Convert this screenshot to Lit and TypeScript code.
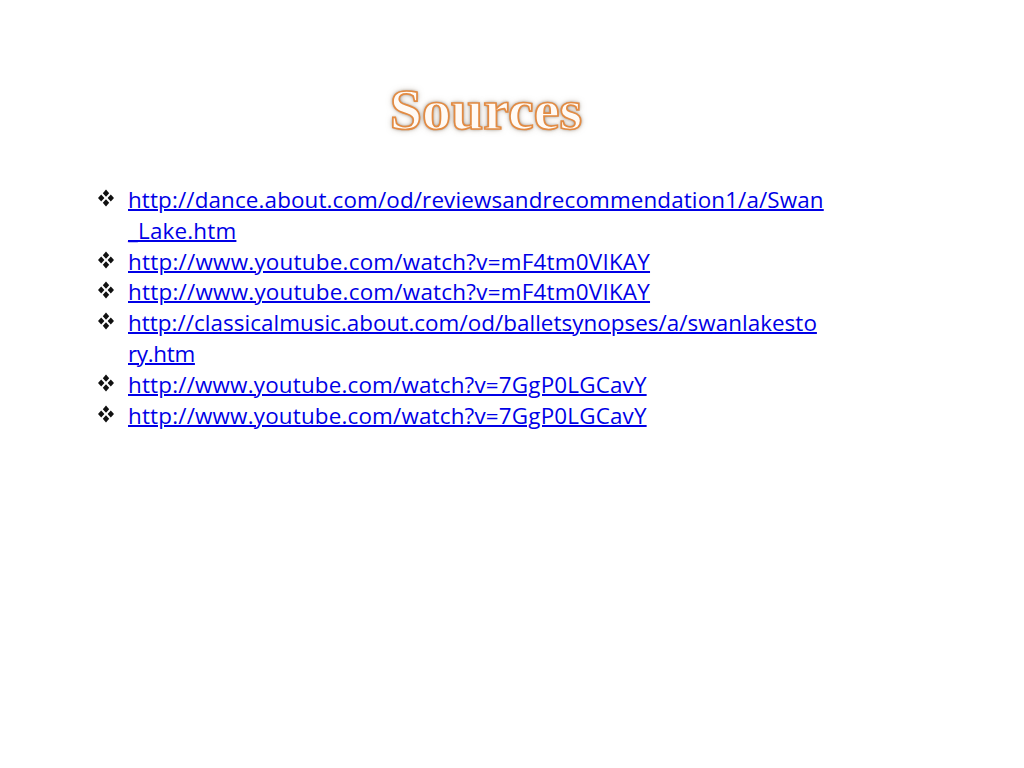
import { LitElement, html, css, svg } from "lit";
import { customElement } from "lit/decorators.js";

interface Part { text: string; spacing: number; }

const youtube1 = [{ text: "http://www.youtube.com/watch?v=mF4tm0VIKAY", spacing: 0.25 }];
const youtube2 = [{ text: "http://www.youtube.com/watch?v=7GgP0LGCavY", spacing: 0.19 }];

const links: Part[][] = [
  [
    { text: "http://dance.about.com/od/reviewsandrecommendation1/a/Swan", spacing: 0.14 },
    { text: "_Lake.htm", spacing: 0.2 },
  ],
  youtube1,
  youtube1,
  [
    { text: "http://classicalmusic.about.com/od/balletsynopses/a/swanlakesto", spacing: 0.05 },
    { text: "ry.htm", spacing: -0.3 },
  ],
  youtube2,
  youtube2,
];

const bullet = svg`<svg class="bullet" viewBox="0 0 18 18" width="18" height="18" aria-hidden="true">
  <path d="M9 .6 12.2 4.2 9 7.8 5.8 4.2Z"/><path d="M9 10.2 12.2 13.8 9 17.4 5.8 13.8Z"/>
  <path d="M4.2 5.4 7.4 9 4.2 12.6 1 9Z"/><path d="M13.8 5.4 17 9 13.8 12.6 10.6 9Z"/>
</svg>`;

@customElement("app-root")
export class AppRoot extends LitElement {
  static styles = css`
    :host { display: block; width: 1024px; height: 768px; background: #fff; overflow: hidden; }
    .slide { display: flex; flex-direction: column; padding: 78px 0 0 97px; box-sizing: border-box; height: 768px; }
    h1 {
      margin: 0 0 0 -97px;
      width: 972px;
      text-align: center;
      font: bold 58px/64px "Liberation Serif", serif;
      color: #fffaf5;
      -webkit-text-stroke: 1.7px #e38b42;
      text-shadow: 0 0 3px rgba(110, 95, 80, 0.9), 0 0 6px rgba(140, 120, 100, 0.6);
    }
    ul { list-style: none; margin: 43px 0 0; padding: 0; display: flex; flex-direction: column; }
    li { display: flex; gap: 13px; font: 22.4px/30.8px "Open Sans", sans-serif; }
    .bullet { flex: none; margin-top: 4px; fill: #111; }
    a { color: #0000e6; text-decoration: underline; text-decoration-thickness: 2px; white-space: nowrap; }
    .line { display: block; }
  `;

  render() {
    return html`<div class="slide">
      <h1>Sources</h1>
      <ul>
        ${links.map(
          (parts) => html`<li>${bullet}<div>${parts.map(
            (p) => html`<span class="line"><a href="#" style="letter-spacing:${p.spacing}px">${p.text}</a></span>`
          )}</div></li>`
        )}
      </ul>
    </div>`;
  }
}
